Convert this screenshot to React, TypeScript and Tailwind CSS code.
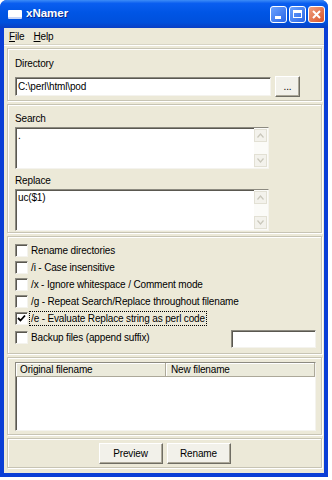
import React from "react";

const font = { fontFamily: '"Liberation Sans", Arial, sans-serif' };
const txt = "text-[10px] tracking-[-0.15px] text-black";

function Panel({
  className,
  children,
}: {
  className?: string;
  children?: React.ReactNode;
}) {
  return (
    <div
      className={
        "border border-[#c7c4b4] shadow-[inset_1px_1px_0_#ffffff,1px_1px_0_#ffffff] " +
        (className ?? "")
      }
    >
      {children}
    </div>
  );
}

function Sunken({
  className,
  children,
}: {
  className?: string;
  children?: React.ReactNode;
}) {
  return (
    <div
      className={
        "bg-white border-t border-l border-t-[#8c8a80] border-l-[#8c8a80] border-b border-r border-b-[#f4f3ee] border-r-[#f4f3ee] shadow-[inset_1px_1px_0_#5a5850] " +
        (className ?? "")
      }
    >
      {children}
    </div>
  );
}

function Arrow({ up }: { up?: boolean }) {
  return (
    <div className="w-[13px] h-[13px] bg-[#f3f2ec] border border-[#e2e0d4] flex items-center justify-center">
      <svg width="7" height="5" viewBox="0 0 7 5">
        <path
          d={up ? "M0.5 4.5 L3.5 1 L6.5 4.5" : "M0.5 0.5 L3.5 4 L6.5 0.5"}
          fill="none"
          stroke="#c9c7bb"
          strokeWidth="1.2"
        />
      </svg>
    </div>
  );
}

function TextArea({ value }: { value: string }) {
  return (
    <Sunken className="w-[254px] h-[42px] flex">
      <div className={"flex-1 px-[2px] pt-[1px] leading-[14px] " + txt}>{value}</div>
      <div className="w-[14px] flex flex-col justify-between bg-[#fbfbf8] py-[1px]">
        <Arrow up />
        <Arrow />
      </div>
    </Sunken>
  );
}

function Check({
  label,
  checked,
  focus,
}: {
  label: string;
  checked?: boolean;
  focus?: boolean;
}) {
  return (
    <div className="h-[17px] flex items-center gap-[2px]">
      <div className="w-[13px] h-[13px] bg-white border border-t-[#8c8a80] border-l-[#8c8a80] border-b-[#f4f3ee] border-r-[#f4f3ee] shadow-[inset_1px_1px_0_#5a5850] flex items-center justify-center">
        {checked && (
          <svg width="9" height="9" viewBox="0 0 9 9">
            <path d="M1 4 L3.5 6.5 L8 1.5" fill="none" stroke="#000" strokeWidth="1.8" />
          </svg>
        )}
      </div>
      <span
        className={
          "px-[1px] leading-[13px] " +
          txt +
          (focus ? " outline outline-1 outline-dotted outline-black" : "")
        }
      >
        {label}
      </span>
    </div>
  );
}

function Btn({ label, className }: { label: string; className?: string }) {
  return (
    <div
      className={
        "h-[21px] flex items-center justify-center bg-[#f2f1ea] border border-t-[#ffffff] border-l-[#ffffff] border-b-[#6f6d63] border-r-[#6f6d63] shadow-[inset_-1px_-1px_0_#aca899] " +
        txt +
        " " +
        (className ?? "")
      }
    >
      {label}
    </div>
  );
}

export default function App() {
  return (
    <div className="w-[332px] h-[480px] bg-white" style={font}>
      <div className="w-[328px] h-[477px] flex flex-col rounded-t-[7px] bg-[#0a3ed6] overflow-hidden">
        {/* title bar */}
        <div className="h-[28px] shrink-0 flex items-center pl-[8px] pr-[3px] bg-[linear-gradient(180deg,#3d8cf7_0%,#0a5ef0_12%,#0055e5_45%,#0050dc_80%,#0a3fc4_100%)]">
          <div className="w-[14px] h-[9px] bg-white border-b-2 border-[#c9d6f5] rounded-[1px]" />
          <span className="ml-[4px] text-[11.5px] font-bold text-white [text-shadow:1px_1px_0_#0a2a8a]">
            xNamer
          </span>
          <div className="ml-auto flex gap-[2px]">
            <div className="w-[17px] h-[17px] rounded-[3px] border border-white bg-[linear-gradient(135deg,#6aa2ff,#2a66e6)] flex items-end justify-start pl-[4px] pb-[3px]">
              <div className="w-[6px] h-[3px] bg-white" />
            </div>
            <div className="w-[17px] h-[17px] rounded-[3px] border border-white bg-[linear-gradient(135deg,#6aa2ff,#2a66e6)] flex items-center justify-center">
              <div className="w-[9px] h-[8px] border border-white border-t-[3px]" />
            </div>
            <div className="w-[17px] h-[17px] rounded-[3px] border border-white bg-[linear-gradient(135deg,#f0a080,#d9542a)] flex items-center justify-center">
              <svg width="9" height="9" viewBox="0 0 9 9">
                <path d="M1 1 L8 8 M8 1 L1 8" stroke="#fff" strokeWidth="2" />
              </svg>
            </div>
          </div>
        </div>

        {/* client */}
        <div className="flex-1 mx-[4px] mb-[4px] bg-[#ece9d8] flex flex-col">
          {/* menu */}
          <div className={"h-[17px] flex items-center gap-[9px] pl-[5px] border-b border-[#d7d4c4] shadow-[0_1px_0_#ffffff] " + txt}>
            <span>
              <span className="underline">F</span>ile
            </span>
            <span>
              <span className="underline">H</span>elp
            </span>
          </div>

          <div className="flex flex-col gap-[3px] pl-[3px] pr-[2px] pt-[3px]">
            {/* directory */}
            <Panel className="h-[53px] pl-[7px] pt-[8px]">
              <div className={"leading-[13px] " + txt}>Directory</div>
              <div className="mt-[6px] flex items-center gap-[4px]">
                <Sunken className={"w-[256px] h-[19px] flex items-center px-[2px] " + txt}>
                  C:\perl\html\pod
                </Sunken>
                <Btn label="..." className="w-[25px] h-[20px]" />
              </div>
            </Panel>

            {/* search / replace */}
            <Panel className="h-[129px] pl-[7px] pt-[7px]">
              <div className={"leading-[13px] " + txt}>Search</div>
              <div className="mt-[2px]">
                <TextArea value="." />
              </div>
              <div className={"mt-[5px] leading-[13px] " + txt}>Replace</div>
              <div className="mt-[2px]">
                <TextArea value="uc($1)" />
              </div>
            </Panel>

            {/* options */}
            <Panel className="h-[118px] pl-[7px] pt-[5px] pr-[5px]">
              <Check label="Rename directories" />
              <Check label="/i - Case insensitive" />
              <Check label="/x - Ignore whitespace / Comment mode" />
              <Check label="/g - Repeat Search/Replace throughout filename" />
              <Check label="/e - Evaluate Replace string as perl code" checked focus />
              <div className="flex items-center">
                <Check label="Backup files (append suffix)" />
                <Sunken className="ml-auto mt-[3px] w-[85px] h-[18px]" />
              </div>
            </Panel>

            {/* list */}
            <Panel className="h-[78px] pl-[7px] pr-[5px] pt-[4px]">
              <Sunken className="h-[69px] flex flex-col">
                <div className={"h-[14px] flex leading-[12px] " + txt}>
                  <div className="w-[150px] pl-[4px] bg-[#ebeadb] border-r border-b border-r-[#aca899] border-b-[#aca899] shadow-[inset_1px_1px_0_#ffffff] flex items-center">
                    Original filename
                  </div>
                  <div className="flex-1 pl-[5px] bg-[#ebeadb] border-r border-b border-r-[#aca899] border-b-[#aca899] shadow-[inset_1px_1px_0_#ffffff] flex items-center">
                    New filename
                  </div>
                </div>
              </Sunken>
            </Panel>

            {/* buttons */}
            <Panel className="h-[30px] flex items-center justify-center gap-[4px]">
              <Btn label="Preview" className="w-[64px]" />
              <Btn label="Rename" className="w-[64px]" />
            </Panel>
          </div>
        </div>
      </div>
    </div>
  );
}
